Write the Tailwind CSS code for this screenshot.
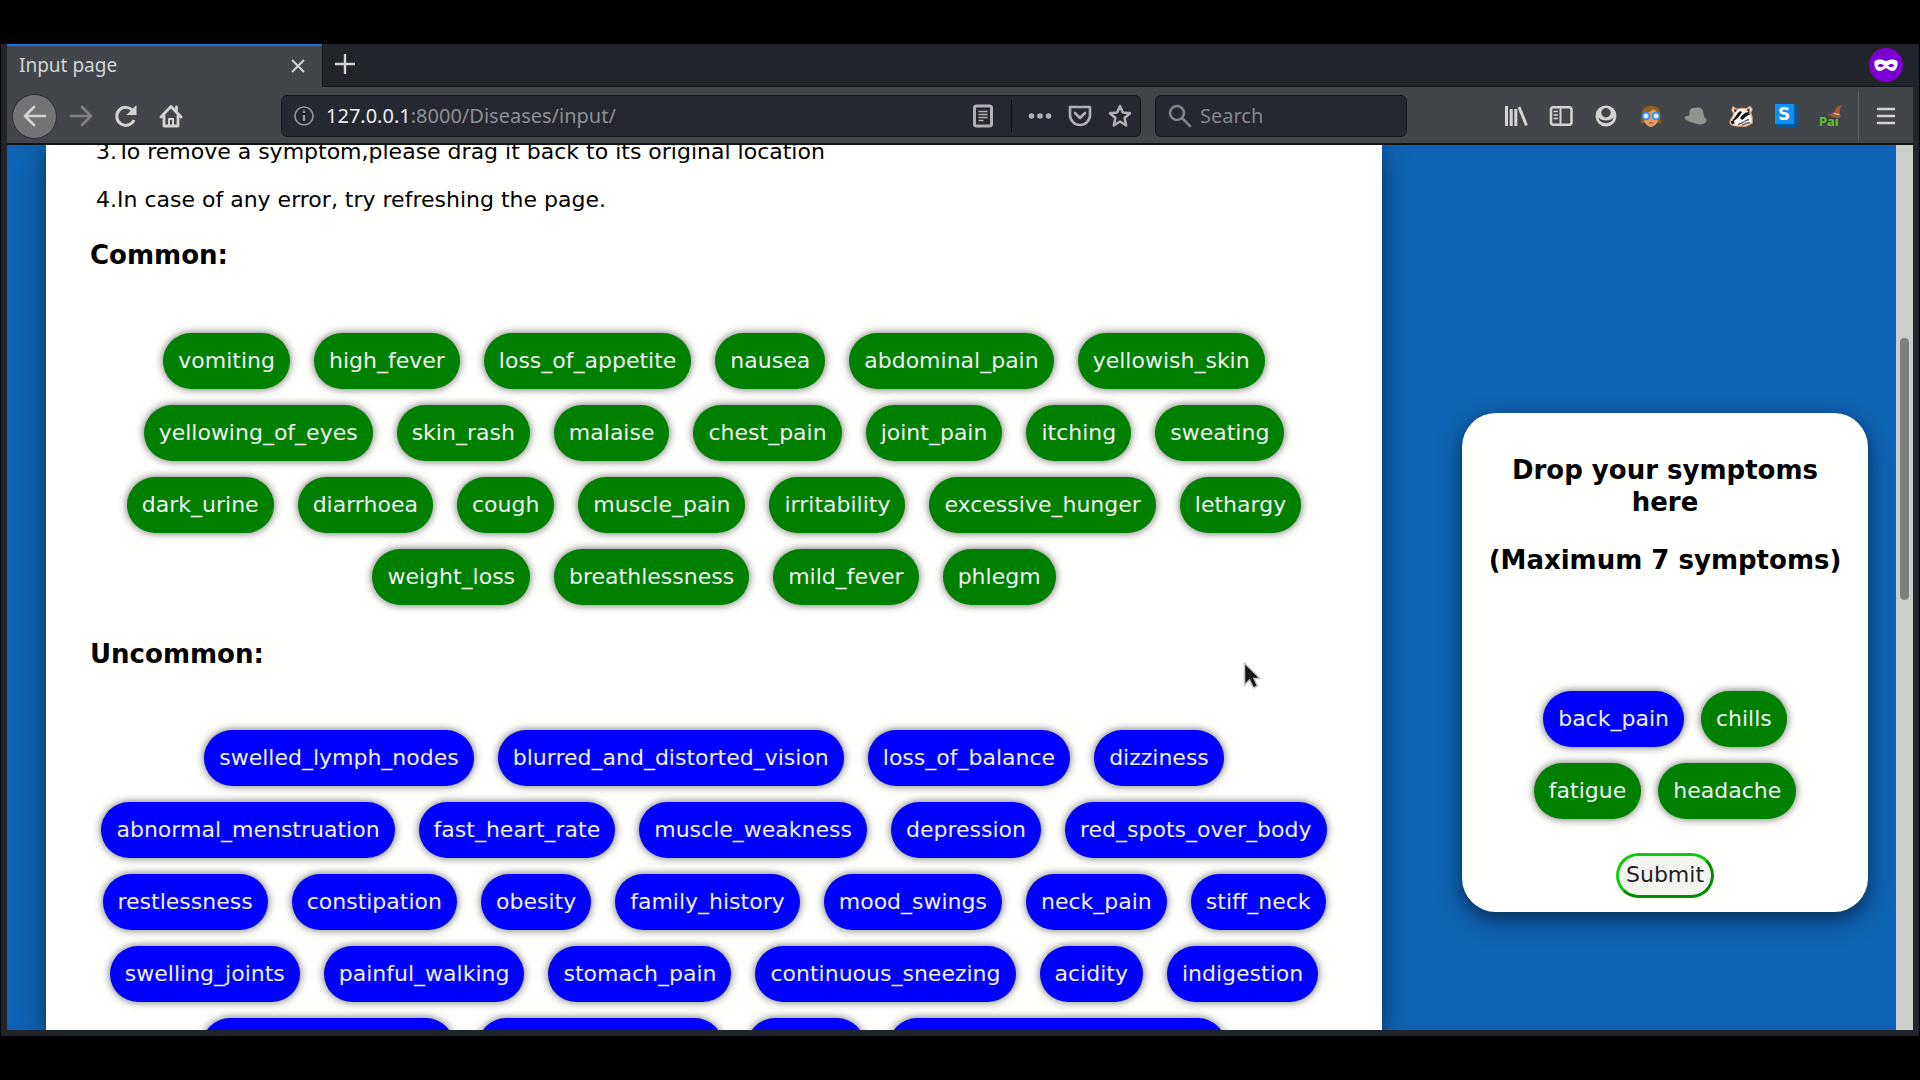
<!doctype html>
<html lang="en">
    <head>
        <meta charset="UTF-8" />
        <meta name="viewport" content="width=device-width, initial-scale=1.0" />
        <title>Input page</title>
        <script src="https://cdn.jsdelivr.net/npm/@tailwindcss/browser@4"></script>
    </head>
    <body class="h-screen overflow-hidden bg-black px-px py-11">
        <div
            class="flex h-full flex-col bg-[#21242b] px-1.5 pb-1.5 font-['Noto_Sans',sans-serif] text-xl text-[#d3d4d2]"
        >
            <!-- Tabs -->
            <div class="flex h-[43px] shrink-0 items-stretch">
                <div
                    class="flex w-[315px] items-center justify-between border-t-2 border-[#1a6ee8] bg-[#42454a] pr-4 pb-0.5 pl-3"
                >
                    <span class="text-[19px]">Input page</span>
                    <button type="button" aria-label="Close tab">
                        <svg class="size-4" viewBox="0 0 16 16" fill="none" stroke="currentColor" stroke-width="2">
                            <path d="M2 2l12 12M14 2L2 14" />
                        </svg>
                    </button>
                </div>
                <button type="button" aria-label="New tab" class="w-12 border-b border-l border-[#15171b] pb-0.5 pl-3">
                    <svg class="size-5" viewBox="0 0 20 20" fill="none" stroke="currentColor" stroke-width="2.4">
                        <path d="M10 0v20M0 10h20" />
                    </svg>
                </button>
                <div class="flex flex-1 items-center justify-end border-b border-[#15171b] pr-2.5">
                    <svg class="size-[34px]" viewBox="0 0 34 34">
                        <circle cx="17" cy="17" r="17" fill="#7d00d2" />
                        <path
                            fill="#fff"
                            fill-rule="evenodd"
                            d="M5.500 13.500C8 11 13 11 17 13.200C21 11 26 11 28.500 13.500C29.200 18 27 23 23.500 23C20.500 23 19 20.200 17 20.200S13.500 23 10.500 23C7 23 4.800 18 5.500 13.500zM8.500 17.500C10 19.600 13.500 19.600 15 17.500C13.500 15.400 10 15.400 8.500 17.500zM19 17.500C20.500 19.600 24 19.600 25.500 17.500C24 15.400 20.500 15.400 19 17.500z"
                        />
                    </svg>
                </div>
            </div>

            <!-- Toolbar -->
            <div class="flex h-[58px] shrink-0 items-center border-b-2 border-[#111315] bg-[#42454a] pt-0.5 pl-[5px]">
                <button
                    type="button"
                    aria-label="Back"
                    class="flex size-[45px] items-center justify-center rounded-full border border-[#2d2f33] bg-[#727375]"
                >
                    <svg class="size-6" viewBox="0 0 24 24" fill="none" stroke="currentColor" stroke-width="2.600" stroke-linecap="round" stroke-linejoin="round">
                        <path d="M22 12H2M11 3l-9 9 9 9" />
                    </svg>
                </button>
                <button type="button" aria-label="Forward" class="flex w-[45px] justify-center pl-0.5 text-[#808285]">
                    <svg class="size-6" viewBox="0 0 24 24" fill="none" stroke="currentColor" stroke-width="2.600" stroke-linecap="round" stroke-linejoin="round">
                        <path d="M2 12h20M13 3l9 9-9 9" />
                    </svg>
                </button>
                <button type="button" aria-label="Reload" class="flex w-[45px] justify-center pl-0.5">
                    <svg class="size-6" viewBox="0 0 24 24" fill="none" stroke="currentColor" stroke-width="3">
                        <path d="M20 16a9 9 0 1 1-1-9" />
                        <path d="M22.500 1v10h-10z" fill="currentColor" stroke="none" />
                    </svg>
                </button>
                <button type="button" aria-label="Home" class="flex w-[45px] justify-center pl-0.5">
                    <svg class="size-6" viewBox="0 0 24 24" fill="none" stroke="currentColor" stroke-width="2.800" stroke-linejoin="round" stroke-linecap="round">
                        <path d="M2 13L12 2.500 22 13M5 12v10h14V12" />
                        <path d="M10 22v-7h4v7" stroke-width="2" />
                        <path d="M17.500 3v4" />
                    </svg>
                </button>

                <div
                    class="ml-[89px] flex h-[42px] flex-1 items-center rounded-md border border-[#121418] bg-[#252830] pl-3 text-[#b1b1b3]"
                >
                    <svg class="size-5 shrink-0 text-[#939598]" viewBox="0 0 20 20" fill="none" stroke="currentColor">
                        <circle cx="10" cy="10" r="9" stroke-width="1.600" />
                        <path d="M10 9v6M10 4.500v2.500" stroke-width="2.400" />
                    </svg>
                    <div class="ml-3 flex-1 text-[#8e8f92]"><span class="text-[#f0f0f0]">127.0.0.1</span>:8000/Diseases/input/</div>
                    <svg class="h-6 w-5 shrink-0" viewBox="0 0 20 24" fill="none" stroke="currentColor">
                        <rect x="1.500" y="2" width="17" height="20" rx="2" stroke-width="3" />
                        <path d="M5.500 7.500h9M5.500 10.500h9M5.500 13.500h9M5.500 16.500h5" stroke-width="1.500" />
                    </svg>
                    <div class="mr-4 ml-[18px] h-8 w-px bg-[#0c0d10]"></div>
                    <svg class="h-6 w-6 shrink-0" viewBox="0 0 24 24" fill="currentColor">
                        <circle cx="3.500" cy="12" r="2.800" />
                        <circle cx="12" cy="12" r="2.800" />
                        <circle cx="20.500" cy="12" r="2.800" />
                    </svg>
                    <svg class="ml-4 size-6 shrink-0" viewBox="0 0 24 24" fill="none" stroke="currentColor" stroke-width="2.600" stroke-linejoin="round">
                        <path d="M2 3h20v8a10 10 0 0 1-20 0z" />
                        <path d="M7 9l5 5 5-5" stroke-linecap="round" />
                    </svg>
                    <svg class="mr-2 ml-4 size-6 shrink-0" viewBox="0 0 24 24" fill="none" stroke="currentColor" stroke-width="2.500" stroke-linejoin="round">
                        <path d="M12 2l2.900 6.600 7.100.7-5.400 4.700 1.600 7.500-6.200-4-6.200 4 1.600-7.500L2 9.300l7.100-.7z" />
                    </svg>
                </div>

                <label
                    class="ml-3.5 flex h-[42px] w-[252px] items-center rounded-md border border-[#121418] bg-[#252830] pl-3 text-[#808184]"
                >
                    <svg class="size-6 shrink-0" viewBox="0 0 24 24" fill="none" stroke="currentColor" stroke-width="2.600" stroke-linecap="round">
                        <circle cx="9" cy="9" r="7" />
                        <path d="M14 14l8 8" />
                    </svg>
                    <input type="text" aria-label="Search" placeholder="Search" class="ml-2 min-w-0 flex-1 placeholder-[#85878a]" />
                </label>

                <div class="ml-[97px] flex items-center gap-[21px]">
                    <svg class="size-6" viewBox="0 0 24 24" fill="none" stroke="currentColor" stroke-width="3">
                        <path d="M2.500 2v20M7.200 5v17M11.800 5v17M15 3l7.500 18.500" />
                    </svg>
                    <svg class="size-6" viewBox="0 0 24 24" fill="none" stroke="currentColor">
                        <rect x="2" y="3.200" width="20.500" height="17.600" rx="2.500" stroke-width="2.600" />
                        <path d="M11.500 3v18" stroke-width="2" />
                        <path d="M4.500 7.500h4.500M4.500 11h4.500M4.500 14.500h4.500" stroke-width="1.500" />
                    </svg>
                    <svg class="size-6" viewBox="0 0 24 24">
                        <circle cx="12" cy="12" r="10.500" fill="currentColor" />
                        <circle cx="12" cy="8.800" r="4.700" fill="#42454a" />
                        <path d="M4.500 13.500c1 7.500 14 7.500 15 0-2 2.200-4.500 3-7.500 3s-5.500-.8-7.500-3z" fill="#42454a" />
                    </svg>
                    <svg class="size-6" viewBox="0 0 24 24">
                        <path d="M3 8C4-.5 20-.5 21 8l1 11H2z" fill="#96601a" />
                        <path d="M5 9c3 0 8-2 10-4 1 2 3 3 4 4v6c0 4-4 8-7 8s-7-4-7-8z" fill="#e0a068" />
                        <circle cx="7" cy="12" r="3.400" fill="#d8eeff" stroke="#2c90e6" stroke-width="1.800" />
                        <circle cx="17" cy="12" r="3.400" fill="#d8eeff" stroke="#2c90e6" stroke-width="1.800" />
                        <path d="M10 19h4" stroke="#b5402c" stroke-width="1.200" />
                    </svg>
                    <svg class="size-6" viewBox="0 0 24 24" fill="#92938f">
                        <path d="M5.500 11.500C5 7 6 4.500 9 4c3-.8 7-.8 9 1 1.500 2 1.500 5 2 8 2.500 1.500 3 3.500 2 5-2 3-8 3-12 1-4-1.500-9-2.500-9.500-5.500C1 12 3 12 5.500 11.500z" />
                    </svg>
                    <svg class="size-6" viewBox="0 0 24 24">
                        <path d="M4 3l4 2.500C11 4 14 4 17 5l4-2.500L23 5l-1.500 4L23 13v6l-6 3H9c-4 0-8-1-8-4 0-2 3-5 4-8L3 6z" fill="#fff" stroke="#f0ad7c" stroke-width="1.300" />
                        <path d="M5 4.500l3 2-2.500 2.500zM20.500 4l-3 2 3 3z" fill="#3a2c26" />
                        <path d="M3 16c3-1 4-6 8-9l2 1c-2 4-5 7-8 9zM11 14c2-3 5-6 9-6l1 3c-3 0-5 3-8 5zM1.500 17l3.500-.5.5 3-2.500 1z" fill="#171717" />
                        <path d="M9 20.500c4-1 7-4 11-5M13 21c3-1 5-2 8-2.500" stroke="#555" stroke-width="1.300" fill="none" />
                    </svg>
                    <svg class="size-6" viewBox="0 0 24 24">
                        <path d="M1 0h19l4 4v20H5l-4-4z" fill="#005a9c" />
                        <path d="M1 0h19v20H1z" fill="#0a91fa" />
                        <text x="4" y="16" font-family="DejaVu Sans" font-weight="bold" font-size="17" fill="#fff">S</text>
                    </svg>
                    <svg class="size-6" viewBox="0 0 24 24">
                        <text x="0" y="22" font-family="Noto Sans" font-weight="bold" font-size="13" fill="#62c230">Pai</text>
                        <path d="M9 10c3 0 5-1 6.500-2C16 4 19 1 24 1c-2 1-2.500 2-3 4l-.5 5 1.500 3c-4 1.500-10 .5-13-3z" fill="#a8583a" />
                        <path d="M14.500 9c2 1.200 4 1.500 6 1.200" stroke="#e8c9a0" stroke-width="1.200" fill="none" />
                    </svg>
                </div>
                <div class="ml-[15px] h-12 w-px bg-[#606266]"></div>
                <button type="button" aria-label="Menu" class="px-[15px]">
                    <svg class="size-6" viewBox="0 0 24 24" fill="none" stroke="currentColor" stroke-width="2.600" stroke-linecap="round">
                        <path d="M4 5h16M4 12h16M4 19h16" />
                    </svg>
                </button>
            </div>

            <!-- Page -->
            <div class="flex min-h-0 flex-1 font-['DejaVu_Sans',sans-serif] text-[22px] text-black">
                <main class="flex min-w-0 flex-1 items-start gap-20 overflow-hidden bg-[#0f63b4] pr-7 pl-[39px]">
                    <section
                        class="h-full min-w-0 flex-1 bg-[#fffffd] px-11 shadow-[0_5px_11px_rgba(0,0,0,0.2),0_8px_27px_rgba(0,0,0,0.4)]"
                    >
                        <div class="-mt-1.5 space-y-[22px] pl-1.5 leading-[26px]">
                            <p>3.To remove a symptom,please drag it back to its original location</p>
                            <p>4.In case of any error, try refreshing the page.</p>
                        </div>
                        <h3 class="mt-[26px] text-[26px] leading-8 font-bold">Common:</h3>
                        <div id="common" class="mt-[62px] flex flex-wrap justify-center gap-x-6 gap-y-4"></div>
                        <h3 class="mt-[33px] text-[26px] leading-8 font-bold">Uncommon:</h3>
                        <div id="uncommon" class="mt-[60px] flex flex-wrap justify-center gap-x-6 gap-y-4"></div>
                    </section>

                    <form
                        class="mt-[268px] flex w-[406px] shrink-0 flex-col items-center rounded-[34px] bg-[#fffffd] px-4 pt-[41px] pb-3.5 text-center shadow-[0_5px_11px_rgba(0,0,0,0.2),0_8px_27px_rgba(0,0,0,0.4)]"
                    >
                        <h3 class="text-[26px] leading-8 font-bold">Drop your symptoms here</h3>
                        <h3 class="mt-[26px] text-[26px] leading-8 font-bold">(Maximum 7 symptoms)</h3>
                        <div id="selected" class="mt-[115px] flex flex-wrap justify-center gap-x-[17px] gap-y-4 px-6"></div>
                        <button
                            type="submit"
                            class="mt-[34px] h-[45px] rounded-full border-3 border-t-[#10c810] border-r-[#008a00] border-b-[#008a00] border-l-[#10c810] bg-[#f3f3f0] px-[7px] text-[#222]"
                        >
                            Submit
                        </button>
                    </form>
                </main>
                <div class="w-[17px] bg-[#cdcdca] px-1 pt-[193px]">
                    <div class="h-[262px] rounded-full bg-[#7f807e]"></div>
                </div>
            </div>
        </div>

        <!-- Mouse pointer -->
        <svg class="absolute top-[661px] left-[1243px] h-7 w-[18px]" viewBox="0 0 18 28">
            <path d="M1.500 2v22l5-5 4 8 4-2-3.500-7.500h6z" fill="#151515" stroke="#c4c4c4" stroke-width="1.500" />
        </svg>

        <script>
            const common = [
                "vomiting", "high_fever", "loss_of_appetite", "nausea", "abdominal_pain", "yellowish_skin",
                "yellowing_of_eyes", "skin_rash", "malaise", "chest_pain", "joint_pain", "itching", "sweating",
                "dark_urine", "diarrhoea", "cough", "muscle_pain", "irritability", "excessive_hunger", "lethargy",
                "weight_loss", "breathlessness", "mild_fever", "phlegm",
            ];
            const uncommon = [
                "swelled_lymph_nodes", "blurred_and_distorted_vision", "loss_of_balance", "dizziness",
                "abnormal_menstruation", "fast_heart_rate", "muscle_weakness", "depression", "red_spots_over_body",
                "restlessness", "constipation", "obesity", "family_history", "mood_swings", "neck_pain", "stiff_neck",
                "swelling_joints", "painful_walking", "stomach_pain", "continuous_sneezing", "acidity", "indigestion",
                "movement_stiffness", "burning_micturition", "bruising", "receiving_blood_transfusion",
            ];
            const selected = ["back_pain", "chills", "fatigue", "headache"];

            function addSymptoms(id, names) {
                const box = document.getElementById(id);
                names.forEach((name) => {
                    const isCommon = id === "common" || (id === "selected" && name !== "back_pain");
                    const pill = document.createElement("div");
                    pill.draggable = true;
                    pill.textContent = name;
                    pill.className = `h-14 cursor-move rounded-full px-[15px] leading-[56px] text-[#f0f0f0] shadow-[0_0_8px_rgba(0,0,0,0.6)] ${isCommon ? "bg-[#008000]" : "bg-[#0000ff]"}`;
                    box.appendChild(pill);
                });
            }

            addSymptoms("common", common);
            addSymptoms("uncommon", uncommon);
            addSymptoms("selected", selected);
        </script>
    </body>
</html>
